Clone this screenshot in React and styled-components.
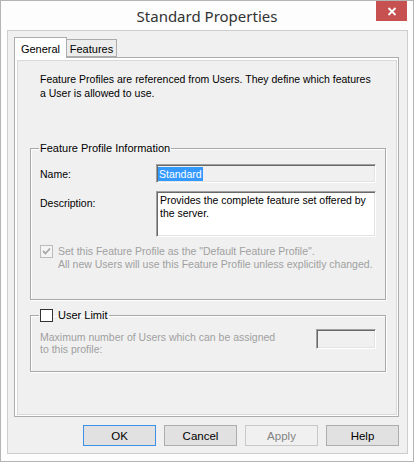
import styled, { createGlobalStyle } from "styled-components";

const GlobalStyle = createGlobalStyle`
  html, body {
    margin: 0;
    padding: 0;
    background: #ffffff;
  }
  * {
    box-sizing: border-box;
  }
`;

const Window = styled.div`
  width: 414px;
  height: 462px;
  border: 1px solid #b4b4b4;
  background: #fdfdfd;
  display: flex;
  flex-direction: column;
  font-family: "Liberation Sans", Arial, sans-serif;
  font-size: 10.5px;
  color: #000;
`;

const TitleBar = styled.div`
  height: 29px;
  display: grid;
  grid-template-columns: 37px 1fr 37px;
  align-items: start;
`;

const Title = styled.div`
  grid-column: 2;
  text-align: center;
  font-family: "Noto Sans", "Open Sans", sans-serif;
  font-size: 15px;
  line-height: 20px;
  padding-top: 5px;
  color: #333;
`;

const CloseButton = styled.div`
  grid-column: 3;
  width: 31px;
  height: 20px;
  background: #c75050;
  display: flex;
  align-items: center;
  justify-content: center;
`;

const Client = styled.div`
  flex: 1;
  margin: 0 5px 7px 6px;
  border: 1px solid #cdcdcd;
  background: #f0f0f0;
  padding: 6px 8px 7px 6px;
  display: flex;
  flex-direction: column;
`;

const TabStrip = styled.div`
  height: 20px;
  display: flex;
  align-items: flex-end;
  position: relative;
  z-index: 1;
`;

const Tab = styled.div`
  height: ${(p) => (p.active ? "21px" : "18px")};
  width: ${(p) => (p.active ? "53px" : "50px")};
  margin-bottom: ${(p) => (p.active ? "-1px" : "0")};
  padding-top: ${(p) => (p.active ? "4px" : "2px")};
  text-align: center;
  border: 1px solid #adadad;
  border-bottom: ${(p) => (p.active ? "none" : "1px solid #adadad")};
  border-left: ${(p) => (p.active ? "1px solid #adadad" : "none")};
  background: ${(p) => (p.active ? "#ffffff" : "#ececec")};
  color: #000;
  font-size: 11px;
  line-height: 14px;
  white-space: nowrap;
`;

const TabPanel = styled.div`
  height: 360px;
  border: 1px solid #adadad;
  background: #ffffff;
  padding: 2px 1px 1px 2px;
  display: flex;
`;

const Page = styled.div`
  flex: 1;
  border: 1px solid #d9d9d9;
  background: #f0f0f0;
  padding: 11px 10px 0 12px;
  display: flex;
  flex-direction: column;
`;

const Intro = styled.p`
  margin: 0 0 0 10px;
  line-height: 14px;
`;

const Group = styled.fieldset`
  margin: ${(p) => p.top}px 0 0 0;
  height: ${(p) => p.h}px;
  border: 1px solid #a9a9a9;
  box-shadow: inset 1px 1px 0 #fff, 1px 1px 0 #fff;
  padding: 0 9px 0 9px;
  min-width: 0;
`;

const Legend = styled.legend`
  padding: 0 1px;
  margin-left: -1px;
  line-height: 14px;
  font-size: 11px;
  display: flex;
  align-items: center;
  gap: 5px;
`;

const FieldRow = styled.div`
  display: grid;
  grid-template-columns: 116px 220px;
  align-items: ${(p) => (p.top ? "start" : "center")};
  margin-top: ${(p) => p.mt}px;
`;

const Label = styled.div`
  line-height: 14px;
  padding-top: ${(p) => (p.top ? "5px" : "0")};
  color: ${(p) => (p.disabled ? "#a0a0a0" : "#000")};
`;

const Sunken = styled.div`
  height: ${(p) => p.h}px;
  width: ${(p) => (p.w ? `${p.w}px` : "auto")};
  margin-top: ${(p) => p.mt || 0}px;
  border-top: 1px solid #a0a0a0;
  border-left: 1px solid #a0a0a0;
  border-right: 1px solid #ffffff;
  border-bottom: 1px solid #ffffff;
  box-shadow: inset 1px 1px 0 #696969, inset -1px -1px 0 #e3e3e3;
  background: ${(p) => (p.white ? "#ffffff" : "#f0f0f0")};
  padding: 2px 3px 0 3px;
  line-height: 13px;
`;

const Selected = styled.span`
  display: inline-block;
  background: #3399ff;
  color: #fff;
  line-height: 14px;
  padding: 0 1px;
  margin-left: -2px;
`;

const CheckRow = styled.div`
  display: flex;
  align-items: flex-start;
  gap: 5px;
  margin-top: 8px;
`;

const Box = styled.span`
  flex: none;
  width: 13px;
  height: 13px;
  border: 1px solid ${(p) => (p.disabled ? "#bcbcbc" : "#333333")};
  background: ${(p) => (p.disabled ? "#f4f4f4" : "#ffffff")};
  display: flex;
  align-items: center;
  justify-content: center;
`;

const CheckText = styled.div`
  line-height: 13px;
  color: ${(p) => (p.disabled ? "#a0a0a0" : "#000")};
`;

const LimitRow = styled.div`
  display: flex;
  justify-content: space-between;
  align-items: flex-start;
  margin-top: 6px;
`;

const LimitText = styled.div`
  line-height: 12px;
  color: #a0a0a0;
  padding-top: 3px;
`;

const ButtonRow = styled.div`
  margin-top: 8px;
  display: flex;
  justify-content: flex-end;
  gap: 8px;
`;

const Button = styled.button`
  width: 73px;
  height: 21px;
  padding: 0;
  font-family: "Liberation Sans", Arial, sans-serif;
  font-size: 11.5px;
  border: 1px solid
    ${(p) => (p.primary ? "#3c91e6" : p.disabled ? "#c8c8c8" : "#adadad")};
  background: ${(p) => (p.disabled ? "#f0f0f0" : "#e1e1e1")};
  color: ${(p) => (p.disabled ? "#838383" : "#000")};
`;

const Check = ({ color }) => (
  <svg width="9" height="9" viewBox="0 0 9 9">
    <path d="M1 4 L3.5 6.5 L8 1.5" fill="none" stroke={color} strokeWidth="1.8" />
  </svg>
);

export default function App() {
  return (
    <>
      <GlobalStyle />
      <Window>
        <TitleBar>
          <Title>Standard Properties</Title>
          <CloseButton>
            <svg width="10" height="9" viewBox="0 0 10 9">
              <path d="M1.5 1 L8.5 8 M8.5 1 L1.5 8" stroke="#fff" strokeWidth="1.8" />
            </svg>
          </CloseButton>
        </TitleBar>
        <Client>
          <TabStrip>
            <Tab active>General</Tab>
            <Tab>Features</Tab>
          </TabStrip>
          <TabPanel>
            <Page>
              <Intro>
                Feature Profiles are referenced from Users. They define which features
                <br />a User is allowed to use.
              </Intro>
              <Group top={41} h={159}>
                <Legend>Feature Profile Information</Legend>
                <FieldRow mt={9}>
                  <Label>Name:</Label>
                  <Sunken h={19}>
                    <Selected>Standard</Selected>
                  </Sunken>
                </FieldRow>
                <FieldRow mt={8} top>
                  <Label top>Description:</Label>
                  <Sunken h={46} white>
                    Provides the complete feature set offered by
                    <br />
                    the server.
                  </Sunken>
                </FieldRow>
                <CheckRow>
                  <Box disabled>
                    <Check color="#a8a8a8" />
                  </Box>
                  <CheckText disabled>
                    Set this Feature Profile as the "Default Feature Profile".
                    <br />
                    All new Users will use this Feature Profile unless explicitly changed.
                  </CheckText>
                </CheckRow>
              </Group>
              <Group top={8} h={64}>
                <Legend>
                  <Box />
                  User Limit
                </Legend>
                <LimitRow>
                  <LimitText>
                    Maximum number of Users which can be assigned
                    <br />
                    to this profile:
                  </LimitText>
                  <Sunken h={20} w={60} mt={1} />
                </LimitRow>
              </Group>
            </Page>
          </TabPanel>
          <ButtonRow>
            <Button primary>OK</Button>
            <Button>Cancel</Button>
            <Button disabled>Apply</Button>
            <Button>Help</Button>
          </ButtonRow>
        </Client>
      </Window>
    </>
  );
}
